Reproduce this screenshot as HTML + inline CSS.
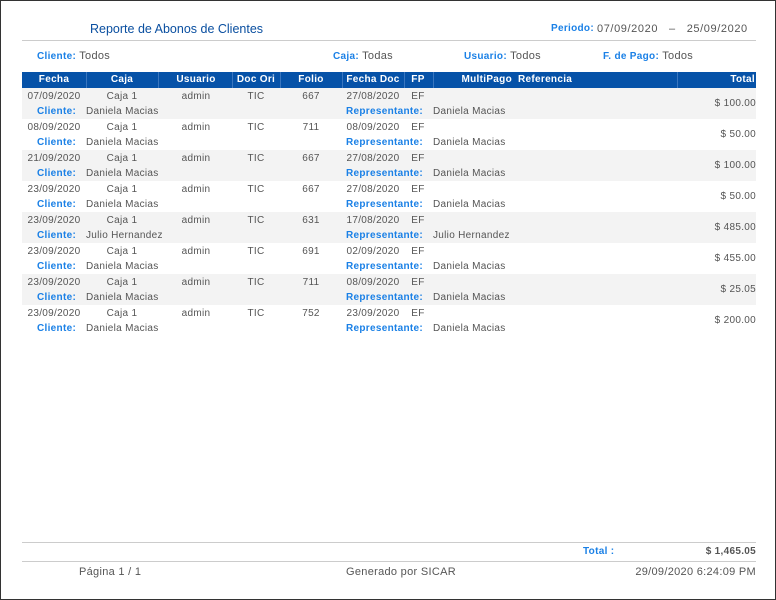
<!DOCTYPE html>
<html><head><meta charset="utf-8"><style>
*{margin:0;padding:0;box-sizing:border-box}
body{width:776px;height:600px;background:#fff;font-family:"Liberation Sans",sans-serif;font-size:10px;color:#555;position:relative;overflow:hidden;letter-spacing:0.3px}
.frame{position:absolute;left:0;top:0;width:776px;height:600px;border:1px solid #333}
.a{position:absolute;white-space:nowrap;line-height:12px}
.b{color:#1a80e6;font-weight:bold}
.hr{position:absolute;left:22px;width:734px;height:1px;background:#ccc}
.head{position:absolute;left:22px;top:72px;width:734px;height:16px;background:#0652a8}
.head .a{color:#fff;font-weight:bold;top:2px}
.sep{position:absolute;top:0;width:1px;height:16px;background:#3a76bf}
.row{position:absolute;left:22px;width:734px;height:31px}
.row .l1{top:3px}
.row .l2{top:18px}
.row .amt{top:10px}
.c{text-align:center;transform:translateX(-50%)}
.r{transform:translateX(-100%)}
</style></head><body>
<div class="frame"></div>
<div class="a" style="left:90px;top:22px;font-size:12.5px;color:#0a4fa0;line-height:14px;letter-spacing:0">Reporte de Abonos de Clientes</div>
<div class="a b" style="left:551px;top:23px">Periodo:</div>
<div class="a" style="left:597px;top:23px;font-size:11px;letter-spacing:0.6px">07/09/2020 &nbsp;&nbsp;– &nbsp;&nbsp;25/09/2020</div>
<div class="hr" style="top:40px"></div>
<div class="a" style="left:37px;top:50px;font-size:11px"><span class="b" style="font-size:10px">Cliente:</span> Todos</div>
<div class="a" style="left:333px;top:50px;font-size:11px"><span class="b" style="font-size:10px">Caja:</span> Todas</div>
<div class="a" style="left:464px;top:50px;font-size:11px"><span class="b" style="font-size:10px">Usuario:</span> Todos</div>
<div class="a" style="left:603px;top:50px;font-size:11px"><span class="b" style="font-size:10px">F. de Pago:</span> Todos</div>
<div class="head">
<div class="sep" style="left:64px"></div><div class="sep" style="left:136px"></div><div class="sep" style="left:210px"></div><div class="sep" style="left:258px"></div><div class="sep" style="left:320px"></div><div class="sep" style="left:382px"></div><div class="sep" style="left:411px"></div><div class="sep" style="left:655px"></div>
<div class="a c" style="left:32px">Fecha</div>
<div class="a c" style="left:100px">Caja</div>
<div class="a c" style="left:174px">Usuario</div>
<div class="a c" style="left:234px">Doc Ori</div>
<div class="a c" style="left:289px">Folio</div>
<div class="a c" style="left:351px">Fecha Doc</div>
<div class="a c" style="left:396px">FP</div>
<div class="a r" style="left:490px">MultiPago</div>
<div class="a" style="left:496px">Referencia</div>
<div class="a r" style="left:733px">Total</div>
</div>
<div class="row" style="top:88px;background:#f3f3f3"><div class="a c l1" style="left:32px">07/09/2020</div><div class="a c l1" style="left:100px">Caja 1</div><div class="a c l1" style="left:174px">admin</div><div class="a c l1" style="left:234px">TIC</div><div class="a c l1" style="left:289px">667</div><div class="a c l1" style="left:351px">27/08/2020</div><div class="a c l1" style="left:396px">EF</div><div class="a b l2" style="left:15px">Cliente:</div><div class="a l2" style="left:64px">Daniela Macias</div><div class="a b r l2" style="left:401px">Representante:</div><div class="a l2" style="left:411px">Daniela Macias</div><div class="a r amt" style="left:734px">$ 100.00</div></div>
<div class="row" style="top:119px;background:#fff"><div class="a c l1" style="left:32px">08/09/2020</div><div class="a c l1" style="left:100px">Caja 1</div><div class="a c l1" style="left:174px">admin</div><div class="a c l1" style="left:234px">TIC</div><div class="a c l1" style="left:289px">711</div><div class="a c l1" style="left:351px">08/09/2020</div><div class="a c l1" style="left:396px">EF</div><div class="a b l2" style="left:15px">Cliente:</div><div class="a l2" style="left:64px">Daniela Macias</div><div class="a b r l2" style="left:401px">Representante:</div><div class="a l2" style="left:411px">Daniela Macias</div><div class="a r amt" style="left:734px">$ 50.00</div></div>
<div class="row" style="top:150px;background:#f3f3f3"><div class="a c l1" style="left:32px">21/09/2020</div><div class="a c l1" style="left:100px">Caja 1</div><div class="a c l1" style="left:174px">admin</div><div class="a c l1" style="left:234px">TIC</div><div class="a c l1" style="left:289px">667</div><div class="a c l1" style="left:351px">27/08/2020</div><div class="a c l1" style="left:396px">EF</div><div class="a b l2" style="left:15px">Cliente:</div><div class="a l2" style="left:64px">Daniela Macias</div><div class="a b r l2" style="left:401px">Representante:</div><div class="a l2" style="left:411px">Daniela Macias</div><div class="a r amt" style="left:734px">$ 100.00</div></div>
<div class="row" style="top:181px;background:#fff"><div class="a c l1" style="left:32px">23/09/2020</div><div class="a c l1" style="left:100px">Caja 1</div><div class="a c l1" style="left:174px">admin</div><div class="a c l1" style="left:234px">TIC</div><div class="a c l1" style="left:289px">667</div><div class="a c l1" style="left:351px">27/08/2020</div><div class="a c l1" style="left:396px">EF</div><div class="a b l2" style="left:15px">Cliente:</div><div class="a l2" style="left:64px">Daniela Macias</div><div class="a b r l2" style="left:401px">Representante:</div><div class="a l2" style="left:411px">Daniela Macias</div><div class="a r amt" style="left:734px">$ 50.00</div></div>
<div class="row" style="top:212px;background:#f3f3f3"><div class="a c l1" style="left:32px">23/09/2020</div><div class="a c l1" style="left:100px">Caja 1</div><div class="a c l1" style="left:174px">admin</div><div class="a c l1" style="left:234px">TIC</div><div class="a c l1" style="left:289px">631</div><div class="a c l1" style="left:351px">17/08/2020</div><div class="a c l1" style="left:396px">EF</div><div class="a b l2" style="left:15px">Cliente:</div><div class="a l2" style="left:64px">Julio Hernandez</div><div class="a b r l2" style="left:401px">Representante:</div><div class="a l2" style="left:411px">Julio Hernandez</div><div class="a r amt" style="left:734px">$ 485.00</div></div>
<div class="row" style="top:243px;background:#fff"><div class="a c l1" style="left:32px">23/09/2020</div><div class="a c l1" style="left:100px">Caja 1</div><div class="a c l1" style="left:174px">admin</div><div class="a c l1" style="left:234px">TIC</div><div class="a c l1" style="left:289px">691</div><div class="a c l1" style="left:351px">02/09/2020</div><div class="a c l1" style="left:396px">EF</div><div class="a b l2" style="left:15px">Cliente:</div><div class="a l2" style="left:64px">Daniela Macias</div><div class="a b r l2" style="left:401px">Representante:</div><div class="a l2" style="left:411px">Daniela Macias</div><div class="a r amt" style="left:734px">$ 455.00</div></div>
<div class="row" style="top:274px;background:#f3f3f3"><div class="a c l1" style="left:32px">23/09/2020</div><div class="a c l1" style="left:100px">Caja 1</div><div class="a c l1" style="left:174px">admin</div><div class="a c l1" style="left:234px">TIC</div><div class="a c l1" style="left:289px">711</div><div class="a c l1" style="left:351px">08/09/2020</div><div class="a c l1" style="left:396px">EF</div><div class="a b l2" style="left:15px">Cliente:</div><div class="a l2" style="left:64px">Daniela Macias</div><div class="a b r l2" style="left:401px">Representante:</div><div class="a l2" style="left:411px">Daniela Macias</div><div class="a r amt" style="left:734px">$ 25.05</div></div>
<div class="row" style="top:305px;background:#fff"><div class="a c l1" style="left:32px">23/09/2020</div><div class="a c l1" style="left:100px">Caja 1</div><div class="a c l1" style="left:174px">admin</div><div class="a c l1" style="left:234px">TIC</div><div class="a c l1" style="left:289px">752</div><div class="a c l1" style="left:351px">23/09/2020</div><div class="a c l1" style="left:396px">EF</div><div class="a b l2" style="left:15px">Cliente:</div><div class="a l2" style="left:64px">Daniela Macias</div><div class="a b r l2" style="left:401px">Representante:</div><div class="a l2" style="left:411px">Daniela Macias</div><div class="a r amt" style="left:734px">$ 200.00</div></div>
<div class="hr" style="top:542px"></div>
<div class="a b" style="left:583px;top:546px">Total :</div>
<div class="a r" style="left:756px;top:546px;font-weight:bold;color:#555">$ 1,465.05</div>
<div class="hr" style="top:561px"></div>
<div class="a" style="left:79px;top:566px;font-size:11px">Página 1 / 1</div>
<div class="a" style="left:346px;top:566px;font-size:11px">Generado por SICAR</div>
<div class="a r" style="left:756px;top:566px;font-size:11px">29/09/2020 6:24:09 PM</div>
</body></html>
